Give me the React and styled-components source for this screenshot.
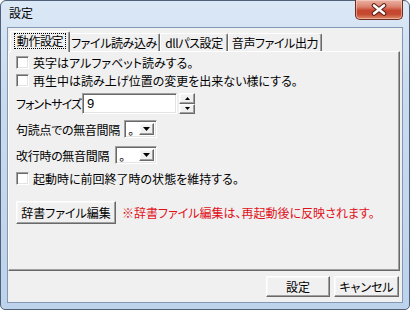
import React from 'react';
import styled, { createGlobalStyle, css } from 'styled-components';

const Global = createGlobalStyle`
  html, body { margin: 0; padding: 0; background: #ffffff; }
  #root { width: 410px; height: 310px; }
`;

const FONT = `"Noto Sans CJK JP", "Noto Sans CJK SC", "Noto Sans", sans-serif`;

const raised = css`
  border: 1px solid;
  border-color: #ffffff #696969 #696969 #ffffff;
  box-shadow: inset -1px -1px 0 #a0a0a0, inset 1px 1px 0 #f8f8f8;
  background: #f0f0f0;
`;

const sunken = css`
  border: 1px solid;
  border-color: #a0a0a0 #ffffff #ffffff #a0a0a0;
  box-shadow: inset 1px 1px 0 #696969, inset -1px -1px 0 #e3e3e3;
  background: #ffffff;
`;

const Window = styled.div`
  box-sizing: border-box;
  width: 410px;
  height: 310px;
  border: 1px solid #4f6078;
  border-radius: 6px 6px 5px 5px;
  background: linear-gradient(180deg, #dbe8f6 0%, #c9dbef 30%, #bdd3eb 100%);
  padding: 0 6px 6px;
  display: flex;
  flex-direction: column;
  font-family: ${FONT};
  font-size: 12px;
  font-feature-settings: "palt";
  color: #000;
`;

const TitleBar = styled.div`
  height: 26px;
  display: flex;
  align-items: flex-start;
  justify-content: space-between;
`;

const Title = styled.div`
  padding: 4px 0 0 2px;
  line-height: 16px;
  font-size: 12px;
`;

const CloseButton = styled.div`
  box-sizing: border-box;
  width: 48px;
  height: 20px;
  margin-top: -1px;
  border: 1px solid #6e2b20;
  border-top: none;
  border-radius: 0 0 5px 5px;
  background: linear-gradient(180deg, #eab3a5 0%, #dc8470 35%, #c6462f 55%, #c54a30 75%, #dd8a6a 100%);
  box-shadow: inset 0 0 0 1px rgba(255, 220, 210, 0.5);
  display: flex;
  align-items: center;
  justify-content: center;
`;

const Client = styled.div`
  flex: 1;
  display: flex;
  flex-direction: column;
  border: 1px solid #8398b4;
  background: #f0f0f0;
`;

const TabControl = styled.div`
  height: 243px;
  margin-right: 2px;
  display: flex;
  flex-direction: column;
`;

const TabStrip = styled.div`
  height: 23px;
  padding-left: 4px;
  display: flex;
  align-items: flex-end;
`;

const Tab = styled.div`
  box-sizing: border-box;
  position: relative;
  width: ${(p) => p.$w}px;
  height: 18px;
  border-top: 1px solid #ffffff;
  border-left: 1px solid #ffffff;
  border-right: 1px solid #696969;
  border-radius: 2px 2px 0 0;
  box-shadow: inset -1px 0 0 #a0a0a0;
  background: #f0f0f0;
  display: flex;
  justify-content: center;
  align-items: center;
  line-height: 14px;
  letter-spacing: -0.4px;
  white-space: nowrap;
  ${(p) =>
    p.$active &&
    css`
      height: 21px;
      margin: 0 -2px -1px -2px;
      z-index: 2;
      align-items: flex-start;
      padding-top: 1px;
    `}
`;

const FocusLabel = styled.span`
  box-sizing: border-box;
  width: calc(100% - 6px);
  height: 16px;
  border: 1px dotted #000;
  display: flex;
  align-items: center;
  justify-content: center;
`;

const Panel = styled.div`
  flex: 1;
  box-sizing: border-box;
  border-top: 1px solid #ffffff;
  border-left: 1px solid #ffffff;
  border-right: 1px solid #696969;
  border-bottom: 1px solid #696969;
  box-shadow: inset -1px -1px 0 #a0a0a0;
  padding: 4px 0 0 7px;
  display: flex;
  flex-direction: column;
`;

const Row = styled.div`
  display: flex;
  align-items: center;
  height: ${(p) => p.$h}px;
  margin-top: ${(p) => p.$mt || 0}px;
  white-space: nowrap;
`;

const CheckBox = styled.span`
  box-sizing: border-box;
  width: 13px;
  height: 13px;
  flex: none;
  ${sunken};
  margin-right: 4px;
`;

const Label = styled.span`
  width: ${(p) => p.$w}px;
  flex: none;
  letter-spacing: ${(p) => p.$ls || 0}px;
  overflow: hidden;
`;

const TextBox = styled.div`
  box-sizing: border-box;
  width: 95px;
  height: 21px;
  ${sunken};
  padding-left: 4px;
  display: flex;
  align-items: center;
  font-family: "Liberation Sans", Arial, sans-serif;
  font-size: 13px;
`;

const Spinner = styled.div`
  width: 16px;
  height: 21px;
  margin-left: 2px;
  display: flex;
  flex-direction: column;
`;

const SpinButton = styled.div`
  box-sizing: border-box;
  flex: 1;
  ${raised};
  display: flex;
  align-items: center;
  justify-content: center;
`;

const Combo = styled.div`
  box-sizing: border-box;
  width: ${(p) => p.$w}px;
  height: 18px;
  ${sunken};
  padding: 2px;
  display: flex;
  align-items: stretch;
`;

const ComboText = styled.span`
  flex: 1;
  padding-left: 1px;
  line-height: 14px;
  font-size: 12px;
`;

const DropButton = styled.div`
  box-sizing: border-box;
  width: 15px;
  ${raised};
  display: flex;
  align-items: center;
  justify-content: center;
`;

const PushButton = styled.div`
  box-sizing: border-box;
  width: ${(p) => p.$w}px;
  height: ${(p) => p.$h}px;
  flex: none;
  ${raised};
  display: flex;
  align-items: center;
  justify-content: center;
  line-height: 14px;
`;

const Notice = styled.span`
  color: #e0101a;
  margin-left: 6px;
`;

const BottomBar = styled.div`
  flex: 1;
  display: flex;
  justify-content: flex-end;
  align-items: flex-start;
  gap: 4px;
  padding: 5px 3px 0 0;
`;

const Triangle = ({ w, h, up }) => (
  <svg width={w} height={h} viewBox={`0 0 ${w} ${h}`}>
    <polygon
      points={up ? `0,${h} ${w},${h} ${w / 2},0` : `0,0 ${w},0 ${w / 2},${h}`}
      fill="#000"
    />
  </svg>
);

const CloseIcon = () => (
  <svg width="18" height="13" viewBox="0 0 18 13">
    <path d="M4 2.5 L14 10.5 M14 2.5 L4 10.5" stroke="#5a1c12" strokeWidth="4.6" strokeLinecap="round" />
    <path d="M4 2.5 L14 10.5 M14 2.5 L4 10.5" stroke="#ffffff" strokeWidth="2.6" strokeLinecap="round" />
  </svg>
);

export default function App() {
  return (
    <>
      <Global />
      <Window>
        <TitleBar>
          <Title>設定</Title>
          <CloseButton>
            <CloseIcon />
          </CloseButton>
        </TitleBar>
        <Client>
          <TabControl>
            <TabStrip>
              <Tab $w={60} $active>
                <FocusLabel>動作設定</FocusLabel>
              </Tab>
              <Tab $w={92}>ファイル読み込み</Tab>
              <Tab $w={68}>dllパス設定</Tab>
              <Tab $w={94}>音声ファイル出力</Tab>
            </TabStrip>
            <Panel>
              <Row $h={13}>
                <CheckBox />
                英字はアルファベット読みする。
              </Row>
              <Row $h={13} $mt={5}>
                <CheckBox />
                再生中は読み上げ位置の変更を出来ない様にする。
              </Row>
              <Row $h={21} $mt={6}>
                <Label $w={66} $ls={-1}>フォントサイズ</Label>
                <TextBox>9</TextBox>
                <Spinner>
                  <SpinButton>
                    <Triangle w={5} h={3} up />
                  </SpinButton>
                  <SpinButton>
                    <Triangle w={5} h={3} />
                  </SpinButton>
                </Spinner>
              </Row>
              <Row $h={18} $mt={6}>
                <Label $w={108} $ls={-0.3}>句読点での無音間隔</Label>
                <Combo $w={33}>
                  <ComboText>。</ComboText>
                  <DropButton>
                    <Triangle w={7} h={4} />
                  </DropButton>
                </Combo>
              </Row>
              <Row $h={18} $mt={8}>
                <Label $w={99} $ls={-0.3}>改行時の無音間隔</Label>
                <Combo $w={42}>
                  <ComboText>。</ComboText>
                  <DropButton>
                    <Triangle w={7} h={4} />
                  </DropButton>
                </Combo>
              </Row>
              <Row $h={13} $mt={8}>
                <CheckBox />
                起動時に前回終了時の状態を維持する。
              </Row>
              <Row $h={23} $mt={16}>
                <PushButton $w={100} $h={23}>辞書ファイル編集</PushButton>
                <Notice>※辞書ファイル編集は、再起動後に反映されます。</Notice>
              </Row>
            </Panel>
          </TabControl>
          <BottomBar>
            <PushButton $w={64} $h={21}>設定</PushButton>
            <PushButton $w={65} $h={21}>キャンセル</PushButton>
          </BottomBar>
        </Client>
      </Window>
    </>
  );
}
